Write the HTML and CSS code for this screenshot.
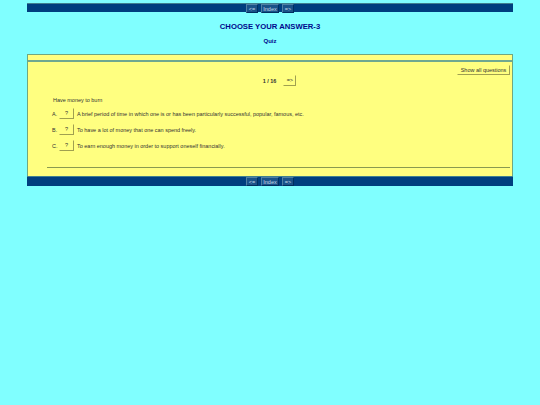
FILE: index.html
```html
<!DOCTYPE html>
<html lang="en">
<head>
    <meta charset="UTF-8">
    <title>Choose your answer-3</title>
    <link rel="stylesheet" href="styles.css">
</head>
<body>
    <div class="page">
        <div class="nav-bar">
            <button class="nav-btn">&lt;=</button>
            <button class="nav-btn index-btn">Index</button>
            <button class="nav-btn">=&gt;</button>
        </div>

        <h1>CHOOSE YOUR ANSWER-3</h1>
        <h2>Quiz</h2>

        <div class="quiz-box">
            <div class="top-strip"></div>
            <div class="quiz-body">
                <div class="show-row">
                    <button class="quiz-btn show-btn">Show all questions</button>
                </div>
                <div class="counter-row">
                    <button class="quiz-btn next-btn hidden-btn">&lt;=</button>
                    <span class="counter">1 / 16</span>
                    <button class="quiz-btn next-btn">=&gt;</button>
                </div>
                <p class="question">Have money to burn</p>
                <div class="answer">
                    <span class="letter">A.</span>
                    <button class="quiz-btn mark-btn">?</button>
                    <span>A brief period of time in which one is or has been particularly successful, popular, famous, etc.</span>
                </div>
                <div class="answer">
                    <span class="letter">B.</span>
                    <button class="quiz-btn mark-btn">?</button>
                    <span>To have a lot of money that one can spend freely.</span>
                </div>
                <div class="answer">
                    <span class="letter">C.</span>
                    <button class="quiz-btn mark-btn">?</button>
                    <span>To earn enough money in order to support oneself financially.</span>
                </div>
                <hr class="rule">
            </div>
            <div class="nav-bar bottom-bar">
                <button class="nav-btn">&lt;=</button>
                <button class="nav-btn index-btn">Index</button>
                <button class="nav-btn">=&gt;</button>
            </div>
        </div>
    </div>
</body>
</html>
```

FILE: styles.css
```css
body {
    margin: 0;
    background-color: #80ffff;
    font-family: "Liberation Sans", Arial, sans-serif;
    color: #333;
}

.page {
    width: 486px;
    margin: 0 auto;
    padding-top: 3px;
}

.nav-bar {
    display: flex;
    justify-content: center;
    gap: 3px;
    height: 8px;
    background-color: #003f7f;
    border-top: 1px solid #408090;
}

.nav-btn {
    width: 12px;
    height: 9px;
    padding: 0;
    border: 1px solid #4f80a4;
    border-right-color: #002f5f;
    border-bottom-color: #002f5f;
    background-color: #1a5288;
    color: #c8dce8;
    font-family: inherit;
    font-size: 5.47px;
    line-height: 6px;
}

.index-btn {
    width: 18px;
}

h1 {
    margin: 10px 0 0;
    color: #00088c;
    font-size: 7.7px;
    line-height: 10px;
    text-align: center;
}

h2 {
    margin: 4px 0 0;
    color: #00088c;
    font-size: 6px;
    line-height: 10px;
    text-align: center;
}

.quiz-box {
    margin-top: 8px;
    background-color: #ffff80;
    border-top: 1px solid #70a880;
    border-left: 1px solid #70a880;
    border-right: 1px solid #70a880;
}

.top-strip {
    height: 5px;
    border-bottom: 2px solid #70a890;
}

.quiz-body {
    padding: 3px 2px 0 0;
    font-size: 5.47px;
}

.show-row {
    display: flex;
    justify-content: flex-end;
}

.quiz-btn {
    height: 10px;
    padding: 0 3px;
    border: 1px solid #ffff80;
    border-right-color: #a0a050;
    border-bottom-color: #a0a050;
    background-color: #ffff80;
    color: #333;
    font-family: inherit;
    font-size: 5.47px;
    line-height: 7px;
}

.show-btn {
    width: 53px;
    padding: 0;
}

.counter-row {
    display: flex;
    justify-content: center;
    align-items: center;
    gap: 7px;
    padding-left: 1px;
}

.counter {
    font-weight: bold;
}

.next-btn {
    width: 13px;
    height: 11px;
    padding: 0;
}

.hidden-btn {
    visibility: hidden;
}

.question {
    margin: 11px 0 -1px 25px;
    line-height: 7px;
}

.answer {
    display: flex;
    align-items: center;
    height: 11px;
    margin: 5px 0 0 24px;
}

.letter {
    width: 7px;
}

.mark-btn {
    width: 15px;
    height: 11px;
    margin-right: 3px;
    padding: 0;
}

.rule {
    height: 0;
    margin: 16px 0 0 19px;
    border: 0;
    border-top: 1px solid #8a9a50;
}

.bottom-bar {
    height: 9px;
    margin: 8px -1px 0;
}
```
